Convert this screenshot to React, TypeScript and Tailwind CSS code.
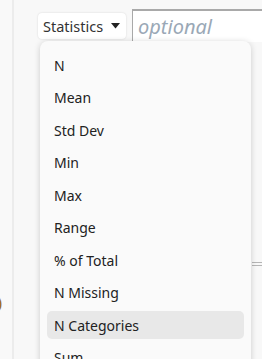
import { useState } from 'react';

const items = ['N', 'Mean', 'Std Dev', 'Min', 'Max', 'Range', '% of Total', 'N Missing', 'N Categories', 'Sum'];

export default function App() {
  const [active] = useState('N Categories');

  return (
    <div
      className="relative w-[262px] h-[359px] overflow-hidden bg-[#f8f8f8] flex"
      style={{ fontFamily: '"Noto Sans", "Open Sans", sans-serif' }}
    >
      {/* left strip */}
      <div className="w-[14px] shrink-0 bg-[#f9f9f9] border-r-2 border-[#ececec] relative">
        <span className="absolute left-[-3px] top-[290px] text-[17px] text-[#9a6a1c]">)</span>
      </div>

      <div className="flex-1 relative">
        {/* top row */}
        <div className="flex items-start pt-[9px] pl-[24px]">
          <button className="mt-[4px] h-[26px] w-[88px] pl-[5px] flex items-center gap-[8px] bg-white rounded-[4px] shadow-[0_0_2px_rgba(0,0,0,0.15)] text-[14.5px] text-[#333]">
            <span className="pt-[1px]">Statistics</span>
            <svg width="9" height="6" viewBox="0 0 9 6">
              <path d="M0 0 H9 L4.5 5.5 Z" fill="#222" />
            </svg>
          </button>
          <div className="ml-[6px] flex-1 h-[33px] bg-white border-t-2 border-l border-[#a9a9a9] pl-[5px] flex items-center">
            <span className="italic text-[20px] text-[#9aa8b6]">optional</span>
          </div>
        </div>

        {/* right edge lines */}
        <div className="absolute right-0 top-[262px] w-[10px] h-[4px] border-y border-[#b5b5b5]" />

        {/* dropdown */}
        <div className="absolute left-[26px] top-[41px] w-[211px] h-[340px] bg-[#fafafa] rounded-[8px] shadow-[0_1px_6px_rgba(0,0,0,0.18)] pt-[10px] px-[7px]">
          {items.map((item) => (
            <div
              key={item}
              className={
                'h-[28px] mb-[4.5px] flex items-center pl-[7px] rounded-[5px] text-[14px] text-[#222] ' +
                (item === active ? 'bg-[#e8e8e8]' : '')
              }
            >
              {item}
            </div>
          ))}
        </div>
      </div>
    </div>
  );
}
